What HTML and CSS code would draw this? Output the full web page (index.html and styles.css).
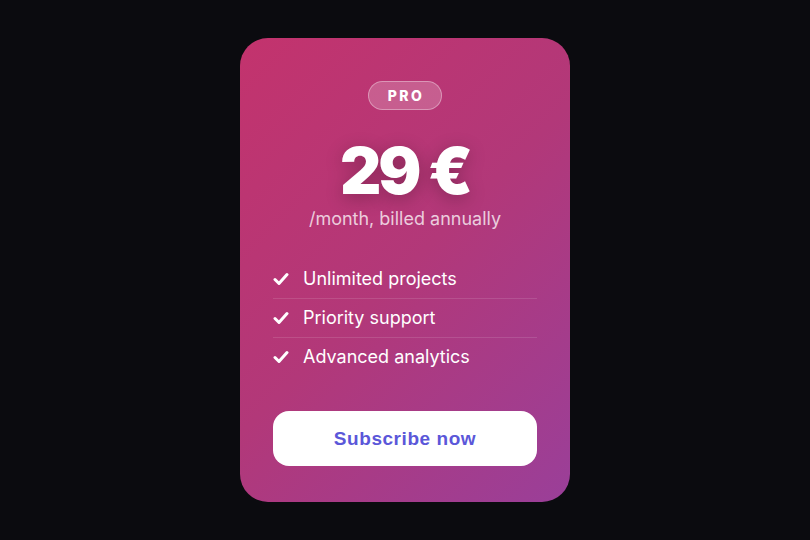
FILE: index.html
```html
<!DOCTYPE html>
<html lang="en">
<head>
  <meta charset="UTF-8" />
  <meta name="viewport" content="width=device-width, initial-scale=1.0"/>
  <title>Pro plan</title>
  <link rel="stylesheet" href="styles.css">
</head>
<body>
  <div class="card">
    <span class="badge">PRO</span>
    <div class="price">29 €</div>
    <p class="period">/month, billed annually</p>
    <ul class="features">
      <li>
        <svg class="check" viewBox="0 0 16 14"><path d="M2 7.5l4 4L14 2.5" /></svg>
        Unlimited projects
      </li>
      <li>
        <svg class="check" viewBox="0 0 16 14"><path d="M2 7.5l4 4L14 2.5" /></svg>
        Priority support
      </li>
      <li>
        <svg class="check" viewBox="0 0 16 14"><path d="M2 7.5l4 4L14 2.5" /></svg>
        Advanced analytics
      </li>
    </ul>
    <button class="subscribe">Subscribe now</button>
  </div>
</body>
</html>
```

FILE: styles.css
```css
body {
  display: flex;
  justify-content: center;
  align-items: center;
  height: 100vh;
  margin: 0;
  background: #0b0b0f;
  font-family: Inter, "Noto Sans", sans-serif;
  color: white;
}
.card {
  width: 264px;
  height: 385px;
  padding: 43px 33px 36px;
  border-radius: 28px;
  background: linear-gradient(135deg, #c3336d 0%, #b23879 50%, #9a3f99 100%);
  display: flex;
  flex-direction: column;
  align-items: center;
}
.badge {
  padding: 5px 17px 5px 19px;
  border: 1px solid rgba(255, 255, 255, 0.35);
  border-radius: 15px;
  background: rgba(255, 255, 255, 0.2);
  font-size: 14px;
  line-height: 17px;
  font-weight: 800;
  letter-spacing: 2.4px;
}
.price {
  margin-top: 29px;
  font-size: 64px;
  line-height: 64px;
  font-weight: 900;
  letter-spacing: -3px;
  text-shadow: 0 4px 18px rgba(0, 0, 0, 0.25);
}
.period {
  margin: 4px 0 0;
  font-size: 18px;
  line-height: 24px;
  color: rgba(255, 255, 255, 0.75);
}
.features {
  list-style: none;
  margin: 29px 0 0;
  padding: 0;
  width: 100%;
}
.features li {
  display: flex;
  align-items: center;
  gap: 14px;
  padding: 9px 0;
  font-size: 18px;
  line-height: 20px;
  font-weight: 400;
  border-bottom: 1px solid rgba(255, 255, 255, 0.12);
}
.features li:last-child {
  border-bottom: none;
}
.check {
  width: 16px;
  height: 14px;
  fill: none;
  stroke: white;
  stroke-width: 3;
  stroke-linecap: round;
  stroke-linejoin: round;
}
.subscribe {
  margin-top: auto;
  width: 100%;
  height: 55px;
  border: none;
  border-radius: 16px;
  background: white;
  color: #5b57d9;
  font-family: "Liberation Sans", Arial, sans-serif;
  font-size: 19px;
  font-weight: 700;
  letter-spacing: 0.55px;
  cursor: pointer;
}
```
